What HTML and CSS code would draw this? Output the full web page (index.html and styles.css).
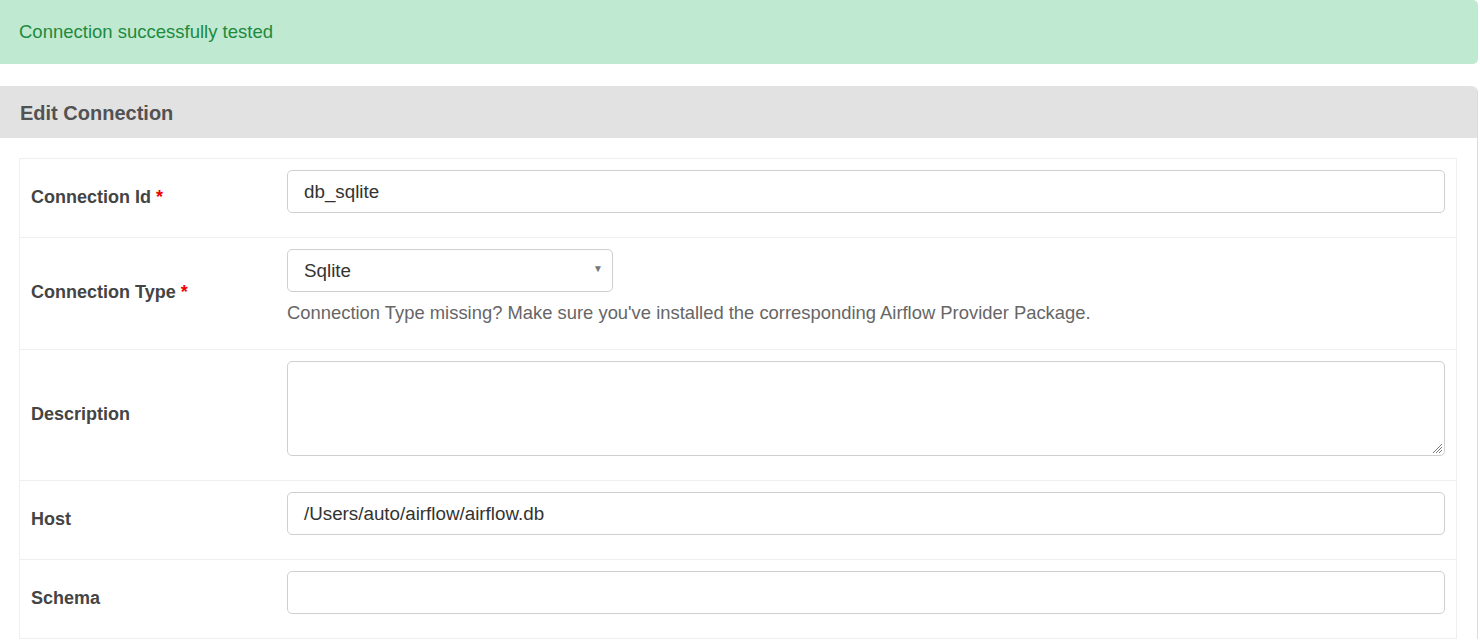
FILE: index.html
```html
<!DOCTYPE html>
<html>
<head>
<meta charset="utf-8">
<link rel="stylesheet" href="styles.css">
</head>
<body>
<div class="page">
  <div class="alert">Connection successfully tested</div>
  <div class="panel">
    <div class="panel-heading">Edit Connection</div>
    <div class="panel-body">
      <table class="form-table">
        <tr>
          <th><label>Connection Id <span class="req">*</span></label></th>
          <td><div class="input">db_sqlite</div></td>
        </tr>
        <tr>
          <th><label>Connection Type <span class="req">*</span></label></th>
          <td>
            <div class="select"><span>Sqlite</span><span class="caret">▼</span></div>
            <p class="help">Connection Type missing? Make sure you've installed the corresponding Airflow Provider Package.</p>
          </td>
        </tr>
        <tr>
          <th><label>Description</label></th>
          <td><div class="textarea"><svg class="grip" width="12" height="12" viewBox="0 0 12 12"><path d="M11 2L2 11M11 5L5 11M11 8L8 11" stroke="#777" stroke-width="1"/></svg></div></td>
        </tr>
        <tr>
          <th><label>Host</label></th>
          <td><div class="input">/Users/auto/airflow/airflow.db</div></td>
        </tr>
        <tr>
          <th><label>Schema</label></th>
          <td><div class="input"></div></td>
        </tr>
      </table>
    </div>
  </div>
</div>
</body>
</html>
```

FILE: styles.css
```css
html, body {
  margin: 0;
  padding: 0;
  background: #fff;
  font-family: "Liberation Sans", Arial, sans-serif;
  overflow: hidden;
}
.page {
  width: 1478px;
}
.alert {
  height: 64px;
  box-sizing: border-box;
  background: #bfe9d1;
  color: #1e8a3e;
  font-size: 18.5px;
  line-height: 64px;
  padding-left: 19px;
  border-radius: 0 5px 5px 0;
  margin-bottom: 22px;
}
.panel {
  border-right: 1px solid #dcdcdc;
  border-top-right-radius: 6px;
}
.panel-heading {
  height: 52px;
  box-sizing: border-box;
  background: #e2e2e2;
  color: #525252;
  font-size: 20px;
  font-weight: 600;
  line-height: 55px;
  padding-left: 20px;
  border-top-right-radius: 6px;
}
.panel-body {
  padding: 20px 20px 0 19px;
}
.form-table {
  width: 100%;
  border-collapse: collapse;
  border-left: 1px solid #efefef;
  border-right: 1px solid #efefef;
}
.form-table tr {
  border-top: 1px solid #efefef;
  border-bottom: 1px solid #efefef;
}
.form-table th, .form-table td {
  border: none;
  vertical-align: middle;
  text-align: left;
}
.form-table th {
  width: 256px;
  padding: 0 0 2px 11px;
  font-size: 18px;
  font-weight: bold;
  color: #444;
}
.form-table td {
  padding: 11px 11px 24px 0;
}
.req {
  color: #e00;
}
.input, .select, .textarea {
  box-sizing: border-box;
  border: 1px solid #cfcfcf;
  border-radius: 5px;
  background: #fff;
  color: #333;
  font-size: 18.8px;
  padding: 0 16px;
}
.input {
  height: 43px;
  line-height: 41px;
}
.select {
  width: 326px;
  height: 43px;
  line-height: 41px;
  display: flex;
  justify-content: space-between;
  align-items: center;
  padding-right: 9px;
}
.caret {
  font-size: 10px;
  color: #777;
  line-height: 10px;
  margin-top: -4px;
}
.help {
  margin: 10px 0 2px;
  font-size: 18.4px;
  color: #666;
  line-height: 21px;
}
.textarea {
  height: 95px;
  display: flex;
  justify-content: flex-end;
  align-items: flex-end;
  padding: 0 1px 1px 0;
}
.grip {
  display: block;
}
```
